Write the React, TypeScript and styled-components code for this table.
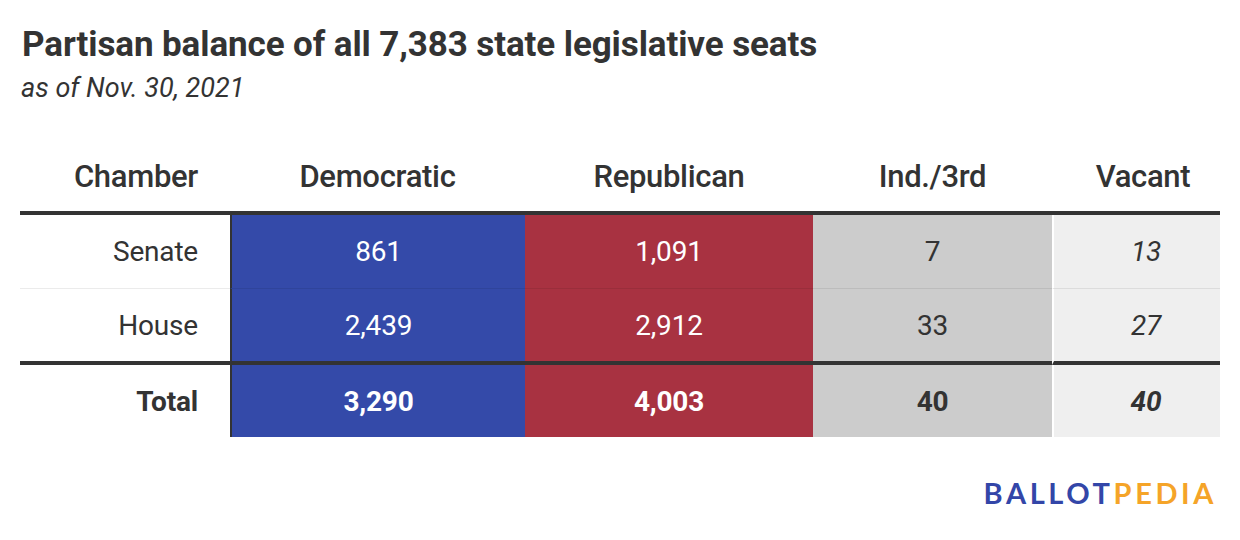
import React from 'react';
import styled, { createGlobalStyle } from 'styled-components';

const GlobalStyle = createGlobalStyle`
	html, body {
		margin: 0;
		padding: 0;
		background: #ffffff;
	}
	body {
		font-family: Roboto, 'Liberation Sans', sans-serif;
		color: #333333;
	}
`;

const Page = styled.div`
	width: 1240px;
	height: 540px;
	box-sizing: border-box;
	padding: 25px 20px 0 20px;
	display: flex;
	flex-direction: column;
`;

const Title = styled.h1`
	margin: 0 0 0 2px;
	font-size: 35px;
	font-weight: 700;
	letter-spacing: -0.1px;
	line-height: 40px;
	color: #333333;
`;

const Subtitle = styled.p`
	margin: 7px 0 0 1px;
	font-size: 27px;
	font-style: italic;
	font-weight: 400;
	line-height: 32px;
	color: #333333;
`;

const Table = styled.div`
	margin-top: 38px;
	display: grid;
	grid-template-columns: 210px 295px 288px 239px 168px;
	width: 1200px;
`;

const HeadCell = styled.div<{ $align?: 'right' | 'center'; $offset?: number }>`
	height: 73px;
	box-sizing: border-box;
	display: flex;
	align-items: center;
	justify-content: ${(p) => (p.$align === 'right' ? 'flex-end' : 'center')};
	padding-right: ${(p) => (p.$align === 'right' ? '32px' : '0')};
	padding-left: ${(p) => p.$offset ?? 0}px;
	font-size: 31px;
	font-weight: 500;
	letter-spacing: -0.3px;
	color: #333333;
	border-bottom: 4px solid #333333;
`;

type Tone = 'label' | 'dem' | 'rep' | 'ind' | 'vac';
type Line = 'light' | 'heavy' | 'none';

const toneBg: Record<Tone, string> = {
	label: '#ffffff',
	dem: '#344aa9',
	rep: '#a83241',
	ind: '#cccccc',
	vac: '#efefef',
};

const Cell = styled.div<{ $tone: Tone; $line: Line; $bold?: boolean }>`
	height: ${(p) => (p.$line === 'heavy' ? '76px' : p.$line === 'light' ? '74px' : '72px')};
	box-sizing: border-box;
	display: flex;
	align-items: center;
	justify-content: ${(p) => (p.$tone === 'label' ? 'flex-end' : 'center')};
	padding-right: ${(p) => (p.$tone === 'label' ? '32px' : '0')};
	padding-left: ${(p) => (p.$tone === 'vac' ? '18px' : '0')};
	background: ${(p) => toneBg[p.$tone]};
	color: ${(p) => (p.$tone === 'dem' || p.$tone === 'rep' ? '#ffffff' : '#333333')};
	font-size: 28px;
	font-weight: ${(p) => (p.$bold ? 700 : 400)};
	font-style: ${(p) => (p.$tone === 'vac' ? 'italic' : 'normal')};
	letter-spacing: -0.2px;
	border-left: ${(p) =>
		p.$tone === 'dem' ? '2px solid #333333' : p.$tone === 'vac' ? '2px solid #ffffff' : 'none'};
	border-bottom: ${(p) =>
		p.$line === 'heavy'
			? '4px solid #333333'
			: p.$line === 'light'
				? '1px solid rgba(0, 0, 0, 0.08)'
				: 'none'};
`;

const Footer = styled.div`
	margin-top: 41px;
	display: flex;
	justify-content: flex-end;
	padding-right: 3px;
`;

const Logo = styled.div`
	font-family: Lato, 'Open Sans', sans-serif;
	font-weight: 700;
	font-size: 29px;
	letter-spacing: 3.6px;
	line-height: 30px;
`;

const LogoPart = styled.span<{ $color: string }>`
	color: ${(p) => p.$color};
`;

const rows: { label: string; values: string[]; line: Line; bold?: boolean }[] = [
	{ label: 'Senate', values: ['861', '1,091', '7', '13'], line: 'light' },
	{ label: 'House', values: ['2,439', '2,912', '33', '27'], line: 'heavy' },
	{ label: 'Total', values: ['3,290', '4,003', '40', '40'], line: 'none', bold: true },
];

const tones: Tone[] = ['dem', 'rep', 'ind', 'vac'];

const App = () => {
	return (
		<Page>
			<GlobalStyle />
			<Title>Partisan balance of all 7,383 state legislative seats</Title>
			<Subtitle>as of Nov. 30, 2021</Subtitle>
			<Table>
				<HeadCell $align='right'>Chamber</HeadCell>
				<HeadCell>Democratic</HeadCell>
				<HeadCell>Republican</HeadCell>
				<HeadCell>Ind./3rd</HeadCell>
				<HeadCell $offset={14}>Vacant</HeadCell>
				{rows.map((row) => (
					<React.Fragment key={row.label}>
						<Cell $tone='label' $line={row.line} $bold={row.bold}>
							{row.label}
						</Cell>
						{row.values.map((v, i) => (
							<Cell key={i} $tone={tones[i]} $line={row.line} $bold={row.bold}>
								{v}
							</Cell>
						))}
					</React.Fragment>
				))}
			</Table>
			<Footer>
				<Logo>
					<LogoPart $color='#3346a8'>BALLOT</LogoPart>
					<LogoPart $color='#f5a428'>PEDIA</LogoPart>
				</Logo>
			</Footer>
		</Page>
	);
};

export default App;
